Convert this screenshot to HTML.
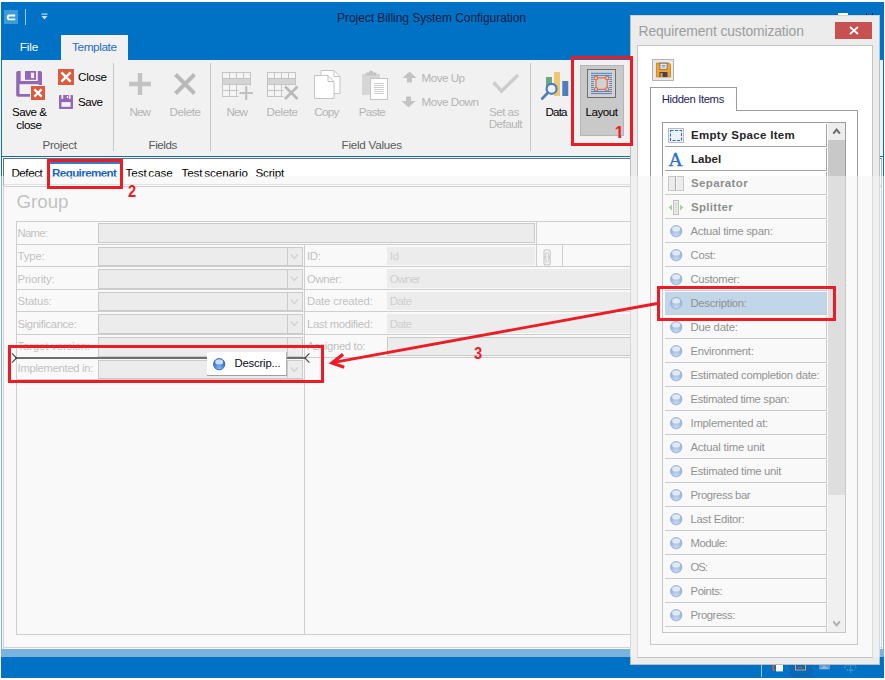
<!DOCTYPE html>
<html><head><meta charset="utf-8"><title>Project Billing System Configuration</title>
<style>
html,body{margin:0;padding:0;background:#fff;}
body{width:885px;height:680px;overflow:hidden;position:relative;font-family:"Liberation Sans",Arial,sans-serif;font-size:11px;}
#root{position:absolute;left:0;top:0;width:885px;height:680px;overflow:hidden;}
#root div,#root svg{position:absolute;box-sizing:border-box;}
.t{white-space:nowrap;line-height:20px;height:20px;}
</style></head><body><div id="root">

<div style="left:1px;top:2px;width:883px;height:676px;background:#0072c6;"></div>
<div style="left:4px;top:10px;width:14px;height:14px;background:#3c9cd8;"></div>
<svg style="left:4px;top:10px" width="14" height="14" viewBox="0 0 14 14"><path d="M11.2 5.5 H5.6 a1.9 1.9 0 0 0 0 3.8 H11.2" fill="none" stroke="#fff" stroke-width="1.8"/></svg>
<div style="left:25px;top:9px;width:1px;height:16px;background:#9cc7ea;"></div>
<svg style="left:40.5px;top:13px" width="8" height="8" viewBox="0 0 8 8"><rect x="0.5" y="0.5" width="6" height="1.2" fill="#c9dff2"/><path d="M0.5 3 H6.5 L3.5 6.5 Z" fill="#c9dff2"/></svg>
<div class="t" style="left:337px;top:7.74px;font-size:12px;color:#0b1d3f;font-weight:normal;letter-spacing:-0.050px;">Project Billing System Configuration</div>
<div class="t" style="left:19.8px;top:36.61px;font-size:11.8px;color:#fff;font-weight:normal;letter-spacing:-0.204px;">File</div>
<div style="left:61px;top:35px;width:67px;height:26px;background:#f1f1f1;"></div>
<div class="t" style="left:72px;top:36.61px;font-size:11.8px;color:#1b6ec2;font-weight:normal;letter-spacing:-0.411px;">Template</div>
<div style="left:2px;top:60px;width:881px;height:96px;background:#f1f1f1;"></div>
<div style="left:2px;top:156px;width:881px;height:1px;background:#0072c6;"></div>
<div style="left:2px;top:157px;width:881px;height:1px;background:#f6f6f6;"></div>
<div style="left:2px;top:158px;width:881px;height:491px;background:#fff;"></div>
<div style="left:3px;top:158px;width:879px;height:1px;background:#6e6e6e;"></div>
<div style="left:881px;top:158px;width:1px;height:491px;background:#b4b4b4;"></div>
<div style="left:3px;top:158px;width:1px;height:28px;background:#6e6e6e;"></div>
<div style="left:3px;top:186px;width:1px;height:463px;background:#b4b4b4;"></div>
<div style="left:3px;top:647px;width:879px;height:1px;background:#b4b4b4;"></div>
<div style="left:113px;top:63px;width:1px;height:88px;background:#c6c6c6;"></div>
<div style="left:210px;top:63px;width:1px;height:88px;background:#c6c6c6;"></div>
<div style="left:530px;top:63px;width:1px;height:88px;background:#c6c6c6;"></div>
<div class="t" style="left:42.6px;top:135.38px;font-size:11.6px;color:#5a5a5a;font-weight:normal;letter-spacing:-0.284px;">Project</div>
<div class="t" style="left:148.5px;top:135.38px;font-size:11.6px;color:#5a5a5a;font-weight:normal;letter-spacing:-0.428px;">Fields</div>
<div class="t" style="left:341.6px;top:135.38px;font-size:11.6px;color:#5a5a5a;font-weight:normal;letter-spacing:-0.234px;">Field Values</div>
<svg style="left:16px;top:71px" width="30" height="30" viewBox="0 0 30 30">
<rect x="0.2" y="0" width="25.8" height="25.8" rx="1.8" fill="#9467b6"/>
<rect x="4.7" y="-1" width="4.3" height="11" fill="#f1f1f1"/>
<rect x="20" y="-1" width="1.8" height="11" fill="#f1f1f1"/>
<rect x="14.9" y="1.7" width="3.2" height="5.4" fill="#f1f1f1"/>
<rect x="9" y="8.8" width="11" height="1.2" fill="#f1f1f1"/>
<rect x="3.5" y="13.2" width="19.4" height="9.8" fill="#f1f1f1"/>
<rect x="14" y="14" width="16" height="16" fill="#f1f1f1"/>
<rect x="15" y="15" width="14" height="14" fill="#dd5a3e"/>
<path d="M18.4 18.4 L25.6 25.6 M25.6 18.4 L18.4 25.6" stroke="#fff" stroke-width="2.3"/>
</svg>
<div class="t" style="left:12px;top:101.98px;font-size:11.6px;color:#000;font-weight:normal;letter-spacing:-0.480px;">Save &amp;</div>
<div class="t" style="left:16.2px;top:114.68px;font-size:11.6px;color:#000;font-weight:normal;letter-spacing:-0.320px;">close</div>
<svg style="left:58px;top:69px" width="16" height="16" viewBox="0 0 16 16"><rect width="16" height="16" fill="#dd5a3e"/>
<path d="M3.4 3.4 L12.6 12.6 M12.6 3.4 L3.4 12.6" stroke="#fff" stroke-width="2.5"/></svg>
<div class="t" style="left:78px;top:67.48px;font-size:11.6px;color:#000;font-weight:normal;letter-spacing:-0.164px;">Close</div>
<svg style="left:59px;top:95px" width="15" height="15" viewBox="0 0 15 15">
<rect x="0" y="0" width="14" height="14" rx="0.8" fill="#9467b6"/>
<rect x="2.4" y="-1" width="1.8" height="4.9" fill="#f1f1f1"/>
<rect x="9.9" y="-1" width="1.7" height="4.9" fill="#f1f1f1"/>
<rect x="7.8" y="0.9" width="1.3" height="2.2" fill="#f1f1f1"/>
<rect x="2.4" y="7.1" width="9.2" height="4.7" fill="#f1f1f1"/>
</svg>
<div class="t" style="left:78px;top:92.48px;font-size:11.6px;color:#000;font-weight:normal;letter-spacing:-0.480px;">Save</div>
<svg style="left:128px;top:72px" width="24" height="24" viewBox="0 0 24 24"><path d="M1 12 H23 M12 1 V23" stroke="#c3c3c3" stroke-width="4.4"/></svg>
<div class="t" style="left:129.5px;top:101.58px;font-size:11.6px;color:#b4b4b4;font-weight:normal;letter-spacing:-0.853px;">New</div>
<svg style="left:173px;top:72px" width="24" height="24" viewBox="0 0 24 24"><path d="M2.5 2.5 L21.5 21.5 M21.5 2.5 L2.5 21.5" stroke="#b9b9b9" stroke-width="4"/></svg>
<div class="t" style="left:169.5px;top:101.58px;font-size:11.6px;color:#b4b4b4;font-weight:normal;letter-spacing:-0.406px;">Delete</div>
<svg style="left:222px;top:72px" width="32" height="29" viewBox="0 0 32 29"><rect x="0.5" y="0.5" width="28" height="24" fill="#f4f4f4" stroke="#c4c4c4"/><rect x="1" y="6.5" width="27" height="6" fill="#d4d4d4"/><path d="M0.5 6.5 H28.5" stroke="#c4c4c4"/><path d="M0.5 12.5 H28.5" stroke="#c4c4c4"/><path d="M0.5 18.5 H28.5" stroke="#c4c4c4"/><path d="M7.5 0.5 V6.5 M7.5 12.5 V24.5" stroke="#c4c4c4"/><path d="M14.5 0.5 V6.5 M14.5 12.5 V24.5" stroke="#c4c4c4"/><path d="M21.5 0.5 V6.5 M21.5 12.5 V24.5" stroke="#c4c4c4"/><rect x="16.5" y="13.5" width="16" height="16" fill="#f1f1f1"/><path d="M17.5 21 H31 M24.2 14 V28" stroke="#c0c0c0" stroke-width="2.2"/></svg>
<div class="t" style="left:226.5px;top:101.58px;font-size:11.6px;color:#b4b4b4;font-weight:normal;letter-spacing:-0.853px;">New</div>
<svg style="left:267px;top:72px" width="32" height="29" viewBox="0 0 32 29"><rect x="0.5" y="0.5" width="28" height="24" fill="#f4f4f4" stroke="#c4c4c4"/><rect x="1" y="6.5" width="27" height="6" fill="#d4d4d4"/><path d="M0.5 6.5 H28.5" stroke="#c4c4c4"/><path d="M0.5 12.5 H28.5" stroke="#c4c4c4"/><path d="M0.5 18.5 H28.5" stroke="#c4c4c4"/><path d="M7.5 0.5 V6.5 M7.5 12.5 V24.5" stroke="#c4c4c4"/><path d="M14.5 0.5 V6.5 M14.5 12.5 V24.5" stroke="#c4c4c4"/><path d="M21.5 0.5 V6.5 M21.5 12.5 V24.5" stroke="#c4c4c4"/><rect x="16.5" y="13.5" width="16" height="16" fill="#f1f1f1"/><path d="M18 14.5 L30.5 27 M30.5 14.5 L18 27" stroke="#b9b9b9" stroke-width="2.6"/></svg>
<div class="t" style="left:266.6px;top:101.58px;font-size:11.6px;color:#b4b4b4;font-weight:normal;letter-spacing:-0.426px;">Delete</div>
<svg style="left:314px;top:70px" width="27" height="30" viewBox="0 0 27 30">
<path d="M7 0.5 H20 L26 6.5 V23.5 H7 Z" fill="#fff" stroke="#c4c4c4"/><path d="M20 0.5 V6.5 H26" fill="none" stroke="#c4c4c4"/>
<path d="M0.5 5.5 H14 L20 11.5 V28.5 H0.5 Z" fill="#fff" stroke="#c4c4c4"/><path d="M14 5.5 V11.5 H20" fill="none" stroke="#c4c4c4"/>
</svg>
<div class="t" style="left:314.2px;top:101.58px;font-size:11.6px;color:#b4b4b4;font-weight:normal;letter-spacing:-0.626px;">Copy</div>
<svg style="left:361px;top:70px" width="28" height="30" viewBox="0 0 28 30">
<rect x="1" y="4" width="18" height="21" fill="#d6d6d6"/>
<rect x="4.5" y="2.5" width="11" height="3" rx="1" fill="#c4c4c4"/><rect x="8" y="0.8" width="4" height="3" rx="1.2" fill="#c4c4c4"/>
<rect x="9.5" y="8.5" width="17" height="21" fill="#fff" stroke="#c4c4c4"/>
<path d="M13 13.5 H23 M13 15.5 H23 M13 17.5 H23 M13 19.5 H23 M13 21.5 H23 M13 23.5 H23" stroke="#c9c9c9" stroke-width="0.9"/>
</svg>
<div class="t" style="left:358.8px;top:101.58px;font-size:11.6px;color:#b4b4b4;font-weight:normal;letter-spacing:-0.690px;">Paste</div>
<svg style="left:402px;top:71px" width="15" height="12" viewBox="0 0 15 12"><path d="M7.5 0.5 L14.5 7 H10 V11.5 H5 V7 H0.5 Z" fill="#c3c3c3"/></svg>
<div class="t" style="left:421.5px;top:67.78px;font-size:11.6px;color:#b4b4b4;font-weight:normal;letter-spacing:-0.486px;">Move Up</div>
<svg style="left:401px;top:96px" width="15" height="12" viewBox="0 0 15 12"><path d="M7.5 11.5 L14.5 5 H10 V0.5 H5 V5 H0.5 Z" fill="#c3c3c3"/></svg>
<div class="t" style="left:421.5px;top:92.48px;font-size:11.6px;color:#b4b4b4;font-weight:normal;letter-spacing:-0.468px;">Move Down</div>
<svg style="left:492px;top:73px" width="28" height="22" viewBox="0 0 28 22"><path d="M1.5 9.5 L9.5 18 L26 2" fill="none" stroke="#cdcdcd" stroke-width="3.4"/></svg>
<div class="t" style="left:489px;top:101.58px;font-size:11.6px;color:#b4b4b4;font-weight:normal;letter-spacing:-0.517px;">Set as</div>
<div class="t" style="left:488.7px;top:113.98px;font-size:11.6px;color:#b4b4b4;font-weight:normal;letter-spacing:-0.475px;">Default</div>
<svg style="left:540px;top:71px" width="30" height="30" viewBox="0 0 30 30">
<rect x="6" y="6" width="6" height="12" fill="#6aa68a"/>
<rect x="14" y="1" width="6" height="24" fill="#f0c673"/>
<rect x="22.3" y="10" width="6" height="15" fill="#4a7fbd"/>
<circle cx="11.6" cy="17.8" r="5" fill="#f1f1f1" stroke="#4a7fbd" stroke-width="2.2"/>
<path d="M7.8 21.8 L2.2 27.6" stroke="#4a7fbd" stroke-width="2.8" stroke-linecap="round"/>
</svg>
<div class="t" style="left:545.6px;top:101.58px;font-size:11.6px;color:#000;font-weight:normal;letter-spacing:-0.867px;">Data</div>
<div style="left:580px;top:65px;width:44px;height:71px;background:#c9c9c9;border:1px solid #b5b5b5;"></div>
<svg style="left:587px;top:69px" width="30" height="30" viewBox="0 0 30 30"><rect x="0.5" y="0.5" width="28" height="28" fill="#d2d2d2" stroke="#6e6e6e"/><path d="M4 4.30 H25" stroke="#4a86c8" stroke-width="1"/><path d="M4 6.33 H25" stroke="#4a86c8" stroke-width="1"/><path d="M4 8.36 H25" stroke="#4a86c8" stroke-width="1"/><path d="M4 10.39 H25" stroke="#4a86c8" stroke-width="1"/><path d="M4 12.42 H25" stroke="#4a86c8" stroke-width="1"/><path d="M4 14.45 H25" stroke="#4a86c8" stroke-width="1"/><path d="M4 16.48 H25" stroke="#4a86c8" stroke-width="1"/><path d="M4 18.51 H25" stroke="#4a86c8" stroke-width="1"/><path d="M4 20.54 H25" stroke="#4a86c8" stroke-width="1"/><path d="M4 22.57 H25" stroke="#4a86c8" stroke-width="1"/><path d="M4 24.60 H25" stroke="#4a86c8" stroke-width="1"/><rect x="6.8" y="7.2" width="15.6" height="14.6" fill="#d2d2d2"/><rect x="9" y="8.9" width="11.2" height="11.4" fill="#d2d2d2" stroke="#e0603c" stroke-width="1.1"/><rect x="7.6" y="7.5" width="2.8" height="2.8" fill="#d8d8d8" stroke="#e0603c" stroke-width="0.9"/><rect x="18.8" y="7.5" width="2.8" height="2.8" fill="#d8d8d8" stroke="#e0603c" stroke-width="0.9"/><rect x="7.6" y="18.900000000000002" width="2.8" height="2.8" fill="#d8d8d8" stroke="#e0603c" stroke-width="0.9"/><rect x="18.8" y="18.900000000000002" width="2.8" height="2.8" fill="#d8d8d8" stroke="#e0603c" stroke-width="0.9"/></svg>
<div class="t" style="left:585.6px;top:101.58px;font-size:11.6px;color:#000;font-weight:normal;letter-spacing:-0.485px;">Layout</div>
<div style="left:4px;top:184px;width:878px;height:1px;background:#cfcfcf;"></div>
<div style="left:4px;top:186px;width:878px;height:1px;background:#ababab;"></div>
<div class="t" style="left:11.4px;top:163.38px;font-size:11.6px;color:#000;font-weight:normal;letter-spacing:-0.425px;">Defect</div>
<div style="left:50px;top:162px;width:70px;height:2px;background:#2b7bd0;"></div>
<div class="t" style="left:52px;top:163.38px;font-size:11.6px;color:#1565c0;font-weight:bold;letter-spacing:-0.590px;">Requirement</div>
<div class="t" style="left:125.5px;top:163.38px;font-size:11.6px;color:#000;font-weight:normal;letter-spacing:-0.025px;word-spacing:-1.5px;">Test case</div>
<div class="t" style="left:181.4px;top:163.38px;font-size:11.6px;color:#000;font-weight:normal;letter-spacing:-0.020px;word-spacing:-1.5px;">Test scenario</div>
<div class="t" style="left:255.5px;top:163.38px;font-size:11.6px;color:#000;font-weight:normal;letter-spacing:-0.190px;">Script</div>
<div class="t" style="left:16.5px;top:191.52px;font-size:18.7px;color:#8f8f8f;font-weight:normal;">Group</div>
<div style="left:16px;top:221px;width:620px;height:414px;border:1px solid #a8a8a8;border-right:none;"></div>
<div style="left:16px;top:244px;width:620px;height:1px;background:#a8a8a8;"></div>
<div style="left:16px;top:266px;width:620px;height:1px;background:#a8a8a8;"></div>
<div style="left:16px;top:289px;width:620px;height:1px;background:#a8a8a8;"></div>
<div style="left:16px;top:311px;width:620px;height:1px;background:#a8a8a8;"></div>
<div style="left:16px;top:334px;width:620px;height:1px;background:#a8a8a8;"></div>
<div style="left:16px;top:357px;width:620px;height:1px;background:#a8a8a8;"></div>
<div style="left:16px;top:379px;width:289px;height:1px;background:#a8a8a8;"></div>
<div style="left:304px;top:244px;width:1px;height:390px;background:#a8a8a8;"></div>
<div class="t" style="left:17.6px;top:223.08px;font-size:11.3px;color:#8e8e8e;font-weight:normal;letter-spacing:-0.770px;">Name:</div>
<div class="t" style="left:17.6px;top:246.08px;font-size:11.3px;color:#8e8e8e;font-weight:normal;letter-spacing:-0.084px;">Type:</div>
<div class="t" style="left:17.6px;top:269.08px;font-size:11.3px;color:#8e8e8e;font-weight:normal;letter-spacing:-0.150px;">Priority:</div>
<div class="t" style="left:17.6px;top:291.08px;font-size:11.3px;color:#8e8e8e;font-weight:normal;letter-spacing:-0.162px;">Status:</div>
<div class="t" style="left:17.6px;top:314.08px;font-size:11.3px;color:#8e8e8e;font-weight:normal;letter-spacing:-0.406px;">Significance:</div>
<div class="t" style="left:17.6px;top:336.08px;font-size:11.3px;color:#8e8e8e;font-weight:normal;letter-spacing:-0.122px;">Target version:</div>
<div class="t" style="left:17.6px;top:358.28px;font-size:11.3px;color:#8e8e8e;font-weight:normal;letter-spacing:-0.328px;">Implemented in:</div>
<div style="left:98px;top:223px;width:437px;height:20px;background:#e4e4e4;border:1px solid #a0a0a0;"></div>
<div style="left:536px;top:222px;width:1px;height:22px;background:#a8a8a8;"></div>
<div style="left:98px;top:247px;width:205px;height:19px;background:#e4e4e4;border:1px solid #a0a0a0;"></div>
<div style="left:287px;top:247px;width:1px;height:19px;background:#a0a0a0;"></div>
<svg style="left:290px;top:253px" width="10" height="8" viewBox="0 0 10 8"><path d="M0.8 1.3 L4.3 5.6 L7.8 1.3" fill="none" stroke="#a8a8a8" stroke-width="1.1"/></svg>
<div style="left:98px;top:269px;width:205px;height:20px;background:#e4e4e4;border:1px solid #a0a0a0;"></div>
<div style="left:287px;top:269px;width:1px;height:20px;background:#a0a0a0;"></div>
<svg style="left:290px;top:275px" width="10" height="8" viewBox="0 0 10 8"><path d="M0.8 1.3 L4.3 5.6 L7.8 1.3" fill="none" stroke="#a8a8a8" stroke-width="1.1"/></svg>
<div style="left:98px;top:292px;width:205px;height:19px;background:#e4e4e4;border:1px solid #a0a0a0;"></div>
<div style="left:287px;top:292px;width:1px;height:19px;background:#a0a0a0;"></div>
<svg style="left:290px;top:298px" width="10" height="8" viewBox="0 0 10 8"><path d="M0.8 1.3 L4.3 5.6 L7.8 1.3" fill="none" stroke="#a8a8a8" stroke-width="1.1"/></svg>
<div style="left:98px;top:314px;width:205px;height:20px;background:#e4e4e4;border:1px solid #a0a0a0;"></div>
<div style="left:287px;top:314px;width:1px;height:20px;background:#a0a0a0;"></div>
<svg style="left:290px;top:320px" width="10" height="8" viewBox="0 0 10 8"><path d="M0.8 1.3 L4.3 5.6 L7.8 1.3" fill="none" stroke="#a8a8a8" stroke-width="1.1"/></svg>
<div style="left:98px;top:337px;width:205px;height:20px;background:#e4e4e4;border:1px solid #a0a0a0;"></div>
<div style="left:287px;top:337px;width:1px;height:20px;background:#a0a0a0;"></div>
<svg style="left:290px;top:343px" width="10" height="8" viewBox="0 0 10 8"><path d="M0.8 1.3 L4.3 5.6 L7.8 1.3" fill="none" stroke="#a8a8a8" stroke-width="1.1"/></svg>
<div style="left:98px;top:360px;width:205px;height:19px;background:#e4e4e4;border:1px solid #a0a0a0;"></div>
<div style="left:287px;top:360px;width:1px;height:19px;background:#a0a0a0;"></div>
<svg style="left:290px;top:366px" width="10" height="8" viewBox="0 0 10 8"><path d="M0.8 1.3 L4.3 5.6 L7.8 1.3" fill="none" stroke="#a8a8a8" stroke-width="1.1"/></svg>
<div class="t" style="left:307px;top:246.08px;font-size:11.3px;color:#8e8e8e;font-weight:normal;letter-spacing:-0.270px;">ID:</div>
<div style="left:387px;top:247px;width:148px;height:18px;background:#e4e4e4;"></div>
<div class="t" style="left:389.7px;top:245.58px;font-size:11.3px;color:#a9a9a9;font-weight:normal;letter-spacing:-0.023px;">Id</div>
<div class="t" style="left:307px;top:269.08px;font-size:11.3px;color:#8e8e8e;font-weight:normal;letter-spacing:-0.324px;">Owner:</div>
<div style="left:387px;top:269px;width:260px;height:19px;background:#e4e4e4;"></div>
<div class="t" style="left:389.7px;top:268.58px;font-size:11.3px;color:#a9a9a9;font-weight:normal;letter-spacing:-0.645px;">Owner</div>
<div class="t" style="left:307px;top:291.08px;font-size:11.3px;color:#8e8e8e;font-weight:normal;letter-spacing:-0.169px;">Date created:</div>
<div style="left:387px;top:292px;width:260px;height:18px;background:#e4e4e4;"></div>
<div class="t" style="left:389.7px;top:290.58px;font-size:11.3px;color:#a9a9a9;font-weight:normal;letter-spacing:-0.523px;">Date</div>
<div class="t" style="left:307px;top:314.08px;font-size:11.3px;color:#8e8e8e;font-weight:normal;letter-spacing:-0.350px;">Last modified:</div>
<div style="left:387px;top:314px;width:260px;height:19px;background:#e4e4e4;"></div>
<div class="t" style="left:389.7px;top:313.58px;font-size:11.3px;color:#a9a9a9;font-weight:normal;letter-spacing:-0.523px;">Date</div>
<div class="t" style="left:307px;top:336.08px;font-size:11.3px;color:#8e8e8e;font-weight:normal;letter-spacing:-0.335px;">Assigned to:</div>
<div style="left:387px;top:337px;width:260px;height:19px;background:#e4e4e4;border:1px solid #a0a0a0;"></div>
<div style="left:536px;top:244px;width:1px;height:22px;background:#a8a8a8;"></div>
<div style="left:562px;top:244px;width:1px;height:22px;background:#a8a8a8;"></div>
<svg style="left:543px;top:249px" width="9" height="17" viewBox="0 0 9 17"><rect x="1" y="0.8" width="6.2" height="8.2" rx="2" fill="#f4f4f4" stroke="#9a9a9a" stroke-width="1.1"/><rect x="1" y="7.8" width="6.2" height="8.2" rx="2" fill="#f4f4f4" stroke="#9a9a9a" stroke-width="1.1"/><rect x="2.9" y="3.6" width="2.4" height="9.6" rx="1" fill="#fff" stroke="#9a9a9a" stroke-width="0.9"/></svg>
<div style="left:1px;top:649px;width:883px;height:29px;background:#0072c6;"></div>
<div style="left:761px;top:664px;width:1px;height:13px;background:#9cc7ea;"></div>
<svg style="left:770px;top:664px" width="100" height="14" viewBox="0 0 100 14"><rect x="6" y="0.8" width="7" height="6.6" fill="#fff"/><path d="M4.6 0 a4 4 0 0 0 0 6.5" stroke="#e0562f" stroke-width="1.8" fill="none"/><rect x="20" y="0" width="23" height="12.7" fill="#0a68b4"/><rect x="25.5" y="-1" width="10" height="7" fill="none" stroke="#c9a08a"/><path d="M28 3.5 H33" stroke="#e0562f" stroke-width="1" stroke-dasharray="1.5 1"/><rect x="49" y="0" width="11" height="5.5" fill="#5a9bd4"/><path d="M50 5 L54 1.5 L59 5" fill="#8dbbe4"/><path d="M80.5 0 V9.5 M75 1.2 H86 M76.5 6 H84.5 M74 3.5 H76 M85 3.5 H87" stroke="#3f9ad0" stroke-width="1.3" stroke-dasharray="1.6 0.8"/></svg>
<div style="left:838px;top:13px;width:10px;height:3px;background:#fff;"></div>
<div style="left:866px;top:13px;width:1px;height:2px;background:#0b1d3f;"></div>
<div style="left:872px;top:13px;width:1px;height:2px;background:#0b1d3f;"></div>
<div style="left:630px;top:15px;width:250px;height:650px;background:#ececec;border:1px solid #bcbcbc;border-top-color:#d6d2ce;"></div>
<div class="t" style="left:638.5px;top:21.18px;font-size:13.9px;color:#9d9d9d;font-weight:normal;letter-spacing:-0.121px;">Requirement customization</div>
<div style="left:835px;top:22px;width:37px;height:17px;background:#c75050;"></div>
<svg style="left:849px;top:26px" width="10" height="9" viewBox="0 0 10 9"><path d="M1 1 L9 8 M9 1 L1 8" stroke="#fff" stroke-width="1.7"/></svg>
<div style="left:637px;top:45px;width:236px;height:613px;background:#fff;border:1px solid #c4c4c4;"></div>
<div style="left:652px;top:59px;width:22px;height:22px;background:#e9e9e9;border:1px solid #b4b4b4;"></div>
<svg style="left:656px;top:62px" width="15" height="16" viewBox="0 0 15 16">
<path d="M0.5 1 H13 L14.5 2.5 V15 H0.5 Z" fill="#f0a330" stroke="#c8801c" stroke-width="0.8"/>
<rect x="4" y="1.2" width="7" height="6" fill="#fff" stroke="#55607a" stroke-width="0.8"/>
<path d="M5.5 3.3 H9.5 M5.5 5 H9.5" stroke="#55607a" stroke-width="0.8"/>
<rect x="3.5" y="10" width="8" height="5" fill="#3f4353"/><rect x="4.5" y="11" width="2" height="4" fill="#f0a330"/>
</svg>
<div style="left:650px;top:110px;width:208px;height:535px;border:1px solid #9c9c9c;background:#fff;"></div>
<div style="left:650px;top:87px;width:87px;height:24px;border:1px solid #9c9c9c;border-bottom:none;background:#fff;"></div>
<div class="t" style="left:661.8px;top:88.88px;font-size:11.3px;color:#1f2460;font-weight:normal;letter-spacing:-0.370px;">Hidden Items</div>
<div style="left:662px;top:122px;width:184px;height:511px;border:1px solid #9c9c9c;background:#fff;overflow:hidden;"></div>
<div style="left:828px;top:123px;width:17px;height:509px;background:#ededed;"></div>
<div style="left:828px;top:140px;width:17px;height:355px;background:#c8c8c8;"></div>
<svg style="left:831px;top:127px" width="11" height="8" viewBox="0 0 11 8"><path d="M2.3 6.6 L5.6 2.6 L8.9 6.6" fill="none" stroke="#6a6a6a" stroke-width="2"/></svg>
<svg style="left:831px;top:619px" width="11" height="8" viewBox="0 0 11 8"><path d="M2.3 2.4 L5.6 6.4 L8.9 2.4" fill="none" stroke="#6a6a6a" stroke-width="2"/></svg>
<div style="left:665px;top:124px;width:162px;height:23px;border-right:1px solid #a2a2a2;border-bottom:1px solid #a2a2a2;"></div>
<svg style="left:668px;top:128px" width="16" height="15" viewBox="0 0 16 15"><rect x="0.5" y="0.5" width="15" height="14" fill="#eef1f6" stroke="#b9bcc4"/><rect x="2.5" y="2.5" width="11" height="10" fill="none" stroke="#2f6fd0" stroke-width="1.1" stroke-dasharray="3 1.5"/></svg>
<div class="t" style="left:691px;top:124.82px;font-size:11.5px;color:#262626;font-weight:bold;letter-spacing:0.309px;">Empty Space Item</div>
<div style="left:665px;top:148px;width:162px;height:23px;border-right:1px solid #a2a2a2;border-bottom:1px solid #a2a2a2;"></div>
<div class="t" style="left:668.5px;top:147.6px;font-family:'Liberation Serif',serif;font-size:19.5px;line-height:24px;height:24px;color:#2a6fc9;font-weight:normal;-webkit-text-stroke:0.35px #2a6fc9;">A</div>
<div class="t" style="left:691px;top:148.82px;font-size:11.5px;color:#262626;font-weight:bold;letter-spacing:0.042px;">Label</div>
<div style="left:665px;top:172px;width:162px;height:23px;border-right:1px solid #a2a2a2;border-bottom:1px solid #a2a2a2;"></div>
<svg style="left:668px;top:176px" width="16" height="15" viewBox="0 0 16 15"><rect x="0.5" y="0.5" width="15" height="14" fill="#e4e4e4" stroke="#9a9a9a"/><path d="M7.5 0.5 V14.5" stroke="#5e5e5e"/><path d="M8.5 0.5 V14.5" stroke="#fff"/></svg>
<div class="t" style="left:691px;top:172.82px;font-size:11.5px;color:#262626;font-weight:bold;letter-spacing:0.377px;">Separator</div>
<div style="left:665px;top:196px;width:162px;height:23px;border-right:1px solid #a2a2a2;border-bottom:1px solid #a2a2a2;"></div>
<svg style="left:668px;top:200px" width="16" height="15" viewBox="0 0 16 15"><rect x="5.5" y="0.5" width="5" height="14" fill="#e4e4e4" stroke="#8a8a8a"/><path d="M8 3 V12" stroke="#7a7a7a" stroke-dasharray="1 1"/><path d="M4 4.5 V10.5 L0.5 7.5 Z M12 4.5 V10.5 L15.5 7.5 Z" fill="#5cae4a"/></svg>
<div class="t" style="left:691px;top:196.82px;font-size:11.5px;color:#262626;font-weight:bold;letter-spacing:0.312px;">Splitter</div>
<div style="left:665px;top:220px;width:162px;height:23px;border-right:1px solid #a2a2a2;border-bottom:1px solid #a2a2a2;"></div>
<svg style="left:670px;top:225px" width="13" height="13" viewBox="0 0 13 13"><defs><radialGradient id="g4" cx="0.5" cy="0.85" r="0.8"><stop offset="0" stop-color="#9ec0ee"/><stop offset="0.6" stop-color="#4d84d0"/><stop offset="1" stop-color="#3d6cb8"/></radialGradient></defs><circle cx="6.2" cy="6.2" r="5.7" fill="url(#g4)" stroke="#3b67b0" stroke-width="0.8"/><ellipse cx="6.2" cy="3.9" rx="4" ry="2.6" fill="#e4eefb" opacity="0.85"/></svg>
<div class="t" style="left:690.5px;top:220.88px;font-size:11.3px;color:#2a2a2a;font-weight:normal;letter-spacing:-0.273px;">Actual time span:</div>
<div style="left:665px;top:244px;width:162px;height:23px;border-right:1px solid #a2a2a2;border-bottom:1px solid #a2a2a2;"></div>
<svg style="left:670px;top:249px" width="13" height="13" viewBox="0 0 13 13"><defs><radialGradient id="g5" cx="0.5" cy="0.85" r="0.8"><stop offset="0" stop-color="#9ec0ee"/><stop offset="0.6" stop-color="#4d84d0"/><stop offset="1" stop-color="#3d6cb8"/></radialGradient></defs><circle cx="6.2" cy="6.2" r="5.7" fill="url(#g5)" stroke="#3b67b0" stroke-width="0.8"/><ellipse cx="6.2" cy="3.9" rx="4" ry="2.6" fill="#e4eefb" opacity="0.85"/></svg>
<div class="t" style="left:690.5px;top:244.88px;font-size:11.3px;color:#2a2a2a;font-weight:normal;letter-spacing:-0.243px;">Cost:</div>
<div style="left:665px;top:268px;width:162px;height:23px;border-right:1px solid #a2a2a2;border-bottom:1px solid #a2a2a2;"></div>
<svg style="left:670px;top:273px" width="13" height="13" viewBox="0 0 13 13"><defs><radialGradient id="g6" cx="0.5" cy="0.85" r="0.8"><stop offset="0" stop-color="#9ec0ee"/><stop offset="0.6" stop-color="#4d84d0"/><stop offset="1" stop-color="#3d6cb8"/></radialGradient></defs><circle cx="6.2" cy="6.2" r="5.7" fill="url(#g6)" stroke="#3b67b0" stroke-width="0.8"/><ellipse cx="6.2" cy="3.9" rx="4" ry="2.6" fill="#e4eefb" opacity="0.85"/></svg>
<div class="t" style="left:690.5px;top:268.88px;font-size:11.3px;color:#2a2a2a;font-weight:normal;letter-spacing:-0.339px;">Customer:</div>
<div style="left:665px;top:292px;width:162px;height:23px;border-right:1px solid #a2a2a2;border-bottom:1px solid #a2a2a2;background:#8fb8dc;"></div>
<svg style="left:670px;top:297px" width="13" height="13" viewBox="0 0 13 13"><defs><radialGradient id="g7" cx="0.5" cy="0.85" r="0.8"><stop offset="0" stop-color="#9ec0ee"/><stop offset="0.6" stop-color="#4d84d0"/><stop offset="1" stop-color="#3d6cb8"/></radialGradient></defs><circle cx="6.2" cy="6.2" r="5.7" fill="url(#g7)" stroke="#3b67b0" stroke-width="0.8"/><ellipse cx="6.2" cy="3.9" rx="4" ry="2.6" fill="#e4eefb" opacity="0.85"/></svg>
<div class="t" style="left:690.5px;top:292.88px;font-size:11.3px;color:#2a2a2a;font-weight:normal;letter-spacing:-0.287px;">Description:</div>
<div style="left:665px;top:316px;width:162px;height:23px;border-right:1px solid #a2a2a2;border-bottom:1px solid #a2a2a2;"></div>
<svg style="left:670px;top:321px" width="13" height="13" viewBox="0 0 13 13"><defs><radialGradient id="g8" cx="0.5" cy="0.85" r="0.8"><stop offset="0" stop-color="#9ec0ee"/><stop offset="0.6" stop-color="#4d84d0"/><stop offset="1" stop-color="#3d6cb8"/></radialGradient></defs><circle cx="6.2" cy="6.2" r="5.7" fill="url(#g8)" stroke="#3b67b0" stroke-width="0.8"/><ellipse cx="6.2" cy="3.9" rx="4" ry="2.6" fill="#e4eefb" opacity="0.85"/></svg>
<div class="t" style="left:690.5px;top:316.88px;font-size:11.3px;color:#2a2a2a;font-weight:normal;letter-spacing:-0.187px;">Due date:</div>
<div style="left:665px;top:340px;width:162px;height:23px;border-right:1px solid #a2a2a2;border-bottom:1px solid #a2a2a2;"></div>
<svg style="left:670px;top:345px" width="13" height="13" viewBox="0 0 13 13"><defs><radialGradient id="g9" cx="0.5" cy="0.85" r="0.8"><stop offset="0" stop-color="#9ec0ee"/><stop offset="0.6" stop-color="#4d84d0"/><stop offset="1" stop-color="#3d6cb8"/></radialGradient></defs><circle cx="6.2" cy="6.2" r="5.7" fill="url(#g9)" stroke="#3b67b0" stroke-width="0.8"/><ellipse cx="6.2" cy="3.9" rx="4" ry="2.6" fill="#e4eefb" opacity="0.85"/></svg>
<div class="t" style="left:690.5px;top:340.88px;font-size:11.3px;color:#2a2a2a;font-weight:normal;letter-spacing:-0.297px;">Environment:</div>
<div style="left:665px;top:364px;width:162px;height:23px;border-right:1px solid #a2a2a2;border-bottom:1px solid #a2a2a2;"></div>
<svg style="left:670px;top:369px" width="13" height="13" viewBox="0 0 13 13"><defs><radialGradient id="g10" cx="0.5" cy="0.85" r="0.8"><stop offset="0" stop-color="#9ec0ee"/><stop offset="0.6" stop-color="#4d84d0"/><stop offset="1" stop-color="#3d6cb8"/></radialGradient></defs><circle cx="6.2" cy="6.2" r="5.7" fill="url(#g10)" stroke="#3b67b0" stroke-width="0.8"/><ellipse cx="6.2" cy="3.9" rx="4" ry="2.6" fill="#e4eefb" opacity="0.85"/></svg>
<div class="t" style="left:690.5px;top:364.88px;font-size:11.3px;color:#2a2a2a;font-weight:normal;letter-spacing:-0.284px;">Estimated completion date:</div>
<div style="left:665px;top:388px;width:162px;height:23px;border-right:1px solid #a2a2a2;border-bottom:1px solid #a2a2a2;"></div>
<svg style="left:670px;top:393px" width="13" height="13" viewBox="0 0 13 13"><defs><radialGradient id="g11" cx="0.5" cy="0.85" r="0.8"><stop offset="0" stop-color="#9ec0ee"/><stop offset="0.6" stop-color="#4d84d0"/><stop offset="1" stop-color="#3d6cb8"/></radialGradient></defs><circle cx="6.2" cy="6.2" r="5.7" fill="url(#g11)" stroke="#3b67b0" stroke-width="0.8"/><ellipse cx="6.2" cy="3.9" rx="4" ry="2.6" fill="#e4eefb" opacity="0.85"/></svg>
<div class="t" style="left:690.5px;top:388.88px;font-size:11.3px;color:#2a2a2a;font-weight:normal;letter-spacing:-0.332px;">Estimated time span:</div>
<div style="left:665px;top:412px;width:162px;height:23px;border-right:1px solid #a2a2a2;border-bottom:1px solid #a2a2a2;"></div>
<svg style="left:670px;top:417px" width="13" height="13" viewBox="0 0 13 13"><defs><radialGradient id="g12" cx="0.5" cy="0.85" r="0.8"><stop offset="0" stop-color="#9ec0ee"/><stop offset="0.6" stop-color="#4d84d0"/><stop offset="1" stop-color="#3d6cb8"/></radialGradient></defs><circle cx="6.2" cy="6.2" r="5.7" fill="url(#g12)" stroke="#3b67b0" stroke-width="0.8"/><ellipse cx="6.2" cy="3.9" rx="4" ry="2.6" fill="#e4eefb" opacity="0.85"/></svg>
<div class="t" style="left:690.5px;top:412.88px;font-size:11.3px;color:#2a2a2a;font-weight:normal;letter-spacing:-0.237px;">Implemented at:</div>
<div style="left:665px;top:436px;width:162px;height:23px;border-right:1px solid #a2a2a2;border-bottom:1px solid #a2a2a2;"></div>
<svg style="left:670px;top:441px" width="13" height="13" viewBox="0 0 13 13"><defs><radialGradient id="g13" cx="0.5" cy="0.85" r="0.8"><stop offset="0" stop-color="#9ec0ee"/><stop offset="0.6" stop-color="#4d84d0"/><stop offset="1" stop-color="#3d6cb8"/></radialGradient></defs><circle cx="6.2" cy="6.2" r="5.7" fill="url(#g13)" stroke="#3b67b0" stroke-width="0.8"/><ellipse cx="6.2" cy="3.9" rx="4" ry="2.6" fill="#e4eefb" opacity="0.85"/></svg>
<div class="t" style="left:690.5px;top:436.88px;font-size:11.3px;color:#2a2a2a;font-weight:normal;letter-spacing:-0.203px;">Actual time unit</div>
<div style="left:665px;top:460px;width:162px;height:23px;border-right:1px solid #a2a2a2;border-bottom:1px solid #a2a2a2;"></div>
<svg style="left:670px;top:465px" width="13" height="13" viewBox="0 0 13 13"><defs><radialGradient id="g14" cx="0.5" cy="0.85" r="0.8"><stop offset="0" stop-color="#9ec0ee"/><stop offset="0.6" stop-color="#4d84d0"/><stop offset="1" stop-color="#3d6cb8"/></radialGradient></defs><circle cx="6.2" cy="6.2" r="5.7" fill="url(#g14)" stroke="#3b67b0" stroke-width="0.8"/><ellipse cx="6.2" cy="3.9" rx="4" ry="2.6" fill="#e4eefb" opacity="0.85"/></svg>
<div class="t" style="left:690.5px;top:460.88px;font-size:11.3px;color:#2a2a2a;font-weight:normal;letter-spacing:-0.282px;">Estimated time unit</div>
<div style="left:665px;top:484px;width:162px;height:23px;border-right:1px solid #a2a2a2;border-bottom:1px solid #a2a2a2;"></div>
<svg style="left:670px;top:489px" width="13" height="13" viewBox="0 0 13 13"><defs><radialGradient id="g15" cx="0.5" cy="0.85" r="0.8"><stop offset="0" stop-color="#9ec0ee"/><stop offset="0.6" stop-color="#4d84d0"/><stop offset="1" stop-color="#3d6cb8"/></radialGradient></defs><circle cx="6.2" cy="6.2" r="5.7" fill="url(#g15)" stroke="#3b67b0" stroke-width="0.8"/><ellipse cx="6.2" cy="3.9" rx="4" ry="2.6" fill="#e4eefb" opacity="0.85"/></svg>
<div class="t" style="left:690.5px;top:484.88px;font-size:11.3px;color:#2a2a2a;font-weight:normal;letter-spacing:-0.417px;">Progress bar</div>
<div style="left:665px;top:508px;width:162px;height:23px;border-right:1px solid #a2a2a2;border-bottom:1px solid #a2a2a2;"></div>
<svg style="left:670px;top:513px" width="13" height="13" viewBox="0 0 13 13"><defs><radialGradient id="g16" cx="0.5" cy="0.85" r="0.8"><stop offset="0" stop-color="#9ec0ee"/><stop offset="0.6" stop-color="#4d84d0"/><stop offset="1" stop-color="#3d6cb8"/></radialGradient></defs><circle cx="6.2" cy="6.2" r="5.7" fill="url(#g16)" stroke="#3b67b0" stroke-width="0.8"/><ellipse cx="6.2" cy="3.9" rx="4" ry="2.6" fill="#e4eefb" opacity="0.85"/></svg>
<div class="t" style="left:690.5px;top:508.88px;font-size:11.3px;color:#2a2a2a;font-weight:normal;letter-spacing:-0.268px;">Last Editor:</div>
<div style="left:665px;top:532px;width:162px;height:23px;border-right:1px solid #a2a2a2;border-bottom:1px solid #a2a2a2;"></div>
<svg style="left:670px;top:537px" width="13" height="13" viewBox="0 0 13 13"><defs><radialGradient id="g17" cx="0.5" cy="0.85" r="0.8"><stop offset="0" stop-color="#9ec0ee"/><stop offset="0.6" stop-color="#4d84d0"/><stop offset="1" stop-color="#3d6cb8"/></radialGradient></defs><circle cx="6.2" cy="6.2" r="5.7" fill="url(#g17)" stroke="#3b67b0" stroke-width="0.8"/><ellipse cx="6.2" cy="3.9" rx="4" ry="2.6" fill="#e4eefb" opacity="0.85"/></svg>
<div class="t" style="left:690.5px;top:532.88px;font-size:11.3px;color:#2a2a2a;font-weight:normal;letter-spacing:-0.516px;">Module:</div>
<div style="left:665px;top:556px;width:162px;height:23px;border-right:1px solid #a2a2a2;border-bottom:1px solid #a2a2a2;"></div>
<svg style="left:670px;top:561px" width="13" height="13" viewBox="0 0 13 13"><defs><radialGradient id="g18" cx="0.5" cy="0.85" r="0.8"><stop offset="0" stop-color="#9ec0ee"/><stop offset="0.6" stop-color="#4d84d0"/><stop offset="1" stop-color="#3d6cb8"/></radialGradient></defs><circle cx="6.2" cy="6.2" r="5.7" fill="url(#g18)" stroke="#3b67b0" stroke-width="0.8"/><ellipse cx="6.2" cy="3.9" rx="4" ry="2.6" fill="#e4eefb" opacity="0.85"/></svg>
<div class="t" style="left:690.5px;top:556.88px;font-size:11.3px;color:#2a2a2a;font-weight:normal;letter-spacing:-0.983px;">OS:</div>
<div style="left:665px;top:580px;width:162px;height:23px;border-right:1px solid #a2a2a2;border-bottom:1px solid #a2a2a2;"></div>
<svg style="left:670px;top:585px" width="13" height="13" viewBox="0 0 13 13"><defs><radialGradient id="g19" cx="0.5" cy="0.85" r="0.8"><stop offset="0" stop-color="#9ec0ee"/><stop offset="0.6" stop-color="#4d84d0"/><stop offset="1" stop-color="#3d6cb8"/></radialGradient></defs><circle cx="6.2" cy="6.2" r="5.7" fill="url(#g19)" stroke="#3b67b0" stroke-width="0.8"/><ellipse cx="6.2" cy="3.9" rx="4" ry="2.6" fill="#e4eefb" opacity="0.85"/></svg>
<div class="t" style="left:690.5px;top:580.88px;font-size:11.3px;color:#2a2a2a;font-weight:normal;letter-spacing:-0.407px;">Points:</div>
<div style="left:665px;top:604px;width:162px;height:23px;border-right:1px solid #a2a2a2;border-bottom:1px solid #a2a2a2;"></div>
<svg style="left:670px;top:609px" width="13" height="13" viewBox="0 0 13 13"><defs><radialGradient id="g20" cx="0.5" cy="0.85" r="0.8"><stop offset="0" stop-color="#9ec0ee"/><stop offset="0.6" stop-color="#4d84d0"/><stop offset="1" stop-color="#3d6cb8"/></radialGradient></defs><circle cx="6.2" cy="6.2" r="5.7" fill="url(#g20)" stroke="#3b67b0" stroke-width="0.8"/><ellipse cx="6.2" cy="3.9" rx="4" ry="2.6" fill="#e4eefb" opacity="0.85"/></svg>
<div class="t" style="left:690.5px;top:604.88px;font-size:11.3px;color:#2a2a2a;font-weight:normal;letter-spacing:-0.444px;">Progress:</div>
<div style="left:665px;top:628px;width:162px;height:4px;border-right:1px solid #a2a2a2;"></div>
<div style="left:0px;top:176px;width:885px;height:481px;background:rgba(243,243,243,0.5);"></div>
<div style="left:0px;top:176px;width:1px;height:481px;background:#fff;"></div>
<div style="left:884px;top:176px;width:1px;height:481px;background:#fff;"></div>
<div style="left:15px;top:357px;width:291px;height:2px;background:#6e6e6e;"></div>
<svg style="left:10px;top:351px" width="8" height="14" viewBox="0 0 8 14"><path d="M2 2.3 L6.6 7 L2 11.7" fill="none" stroke="#444" stroke-width="1.1"/></svg>
<svg style="left:303px;top:351px" width="8" height="14" viewBox="0 0 8 14"><path d="M6.4 2.3 L1.8 7 L6.4 11.7" fill="none" stroke="#444" stroke-width="1.1"/></svg>
<div style="left:207px;top:352px;width:80px;height:24px;background:#fff;border-right:1px solid #b0b0b0;border-bottom:1px solid #a0a0a0;"></div>
<svg style="left:212.5px;top:357.5px" width="13" height="13" viewBox="0 0 13 13"><defs><radialGradient id="gd" cx="0.5" cy="0.85" r="0.8"><stop offset="0" stop-color="#8db8f0"/><stop offset="0.6" stop-color="#3f7fd6"/><stop offset="1" stop-color="#2f62b4"/></radialGradient></defs><circle cx="6.2" cy="6.2" r="5.7" fill="url(#gd)" stroke="#2f5fae" stroke-width="0.8"/><ellipse cx="6.2" cy="3.9" rx="4" ry="2.6" fill="#dbe9fb" opacity="0.9"/></svg>
<div class="t" style="left:234.5px;top:353.08px;font-size:11.3px;color:#0a0a2a;font-weight:normal;letter-spacing:-0.180px;">Descrip...</div>
<div style="left:571px;top:56px;width:62px;height:90px;border:3px solid #ed1c24;"></div>
<div style="left:47px;top:159px;width:76px;height:30px;border:3px solid #ed1c24;"></div>
<div style="left:8px;top:345px;width:316px;height:38px;border:3px solid #ed1c24;"></div>
<div style="left:657px;top:286px;width:179px;height:35px;border:3px solid #ed1c24;"></div>
<div class="t" style="left:614.86px;top:122.15px;font-size:16.3px;color:#ed1c24;font-weight:bold;clip-path:polygon(0 0,12px 0,12px 13.7px,6.3px 13.7px,6.3px 20px,3.55px 20px,3.55px 13.7px,0 13.7px);">1</div>
<div class="t" style="left:127.8px;top:181.15px;font-size:16.3px;color:#ed1c24;font-weight:bold;transform:scaleX(0.9);transform-origin:left;">2</div>
<div class="t" style="left:474px;top:342.55px;font-size:16.3px;color:#ed1c24;font-weight:bold;transform:scaleX(0.9);transform-origin:left;">3</div>
<svg style="left:0;top:0" width="885" height="680" viewBox="0 0 885 680"><path d="M657 303.5 L332.5 362.6" stroke="#ed1c24" stroke-width="2.8" fill="none"/><path d="M343 354.4 L332 363 L344.2 367.2" stroke="#ed1c24" stroke-width="3.3" fill="none" stroke-linejoin="miter"/></svg>
<div style="left:0px;top:0px;width:885px;height:2px;background:#fff;"></div>
<div style="left:0px;top:678px;width:885px;height:2px;background:#fff;"></div>
<div style="left:0px;top:0px;width:1px;height:680px;background:#fff;"></div>
<div style="left:884px;top:0px;width:1px;height:680px;background:#fff;"></div>
</div></body></html>
